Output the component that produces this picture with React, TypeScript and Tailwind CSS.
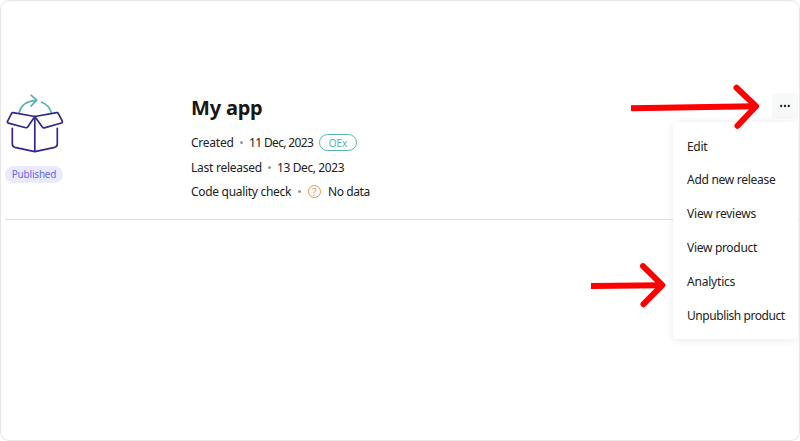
import React from "react";

const menuItems = [
  { label: "Edit", spacing: "tracking-[-0.3px]" },
  { label: "Add new release", spacing: "tracking-[-0.28px]" },
  { label: "View reviews", spacing: "tracking-[-0.2px]" },
  { label: "View product", spacing: "tracking-[-0.3px]" },
  { label: "Analytics", spacing: "tracking-[-0.2px]" },
  { label: "Unpublish product", spacing: "tracking-[-0.43px]" },
];

function BoxLogo() {
  return (
    <svg className="mt-px block h-[60px] w-[60px]" viewBox="0 0 60 60" fill="none" strokeWidth="1.7" strokeLinecap="round" strokeLinejoin="round">
      <g stroke="#58b5ae">
        <path d="M14.2 18.5C16 11.5 22 7 31 6.4M26 1.2l5.8 5L26 12.2M36.5 8.2c5 1.8 8.300 5.5 9.700 10.300" />
      </g>
      <g stroke="#30288e">
        <path d="M29.800 22.500 8.200 18.700Q7 18.500 6.500 19.600L2.500 27.400Q2 28.700 3.400 29.100L20.800 33.700Q22 34 22.700 33Z" />
        <path d="M29.800 22.500 51.700 18.700Q52.900 18.500 53.400 19.600L57.300 27.200Q57.800 28.600 56.400 29L39.300 33.900Q38.200 34.200 37.500 33.200Z" />
        <path d="M29.800 22.500V57.700M7.300 34.300V50Q7.300 52.600 9.800 53.300L29.800 57.700 49.800 53.300Q52.300 52.600 52.300 50V34.300" />
      </g>
    </svg>
  );
}

function Dot() {
  return <i className="block size-[3px] shrink-0 rounded-full bg-[#999]" />;
}

export default function App() {
  return (
    <main className="relative h-[441px] w-[800px] overflow-hidden rounded-[9px] border border-[#e7e7e7] bg-white font-['Noto_Sans',sans-serif] text-[12px] text-[#222]">
      <section className="ml-1 mt-[92px] flex h-[127px] border-b-[1.5px] border-[#dedede]">
        <aside className="flex w-[186px] flex-col items-start">
          <BoxLogo />
          <span className="mt-[12px] flex h-[17px] w-[58px] items-center justify-center rounded-full bg-[#eaeaff] text-[10px] tracking-[-0.2px] text-[#6666ef]">Published</span>
        </aside>
        <div className="flex-1">
          <h1 className="h-[37px] whitespace-nowrap pt-px text-[20px] font-bold leading-[27px] tracking-[-0.2px] text-[#171717]">My app</h1>
          <div className="flex h-[25px] items-center whitespace-nowrap">
            <span className="w-[49px] tracking-[-0.25px]">Created</span><Dot />
            <span className="ml-[6px] w-[70px] tracking-[-0.65px]">11 Dec, 2023</span>
            <span className="flex h-[17px] w-[38px] items-center justify-center rounded-full border border-[#58b5ae] pt-px text-[10px] text-[#58b5ae]">OEx</span>
          </div>
          <div className="flex h-6 items-center whitespace-nowrap pt-px">
            <span className="w-[77px] tracking-[-0.25px]">Last released</span><Dot />
            <span className="ml-[6px] tracking-[-0.4px]">13 Dec, 2023</span>
          </div>
          <div className="flex h-6 items-center whitespace-nowrap pt-px">
            <span className="w-[107px] tracking-[-0.3px]">Code quality check</span><Dot />
            <span className="ml-[7px] mr-[7px] flex size-[13px] items-center justify-center rounded-full border border-[#f2943b] text-[10px] leading-none text-[#f2943b]">?</span>
            <span className="tracking-[-0.4px]">No data</span>
          </div>
        </div>
        <button className="mr-px flex size-[26px] items-center justify-center rounded-[4px] bg-[#f7f9f9]" aria-label="Product actions">
          <svg className="h-[4px] w-[12px]" viewBox="0 0 12 4" fill="#1b1b1b">
            <circle cx="2.2" cy="2" r="1.15" /><circle cx="6" cy="2" r="1.15" /><circle cx="9.800" cy="2" r="1.15" />
          </svg>
        </button>
      </section>
      <nav className="absolute left-[672px] top-[121px] flex h-[217px] w-[125px] flex-col rounded-[4px] bg-white pl-[14px] pt-[7.6px] shadow-[0_1px_9px_rgba(0,0,0,0.09)]">
        {menuItems.map((item) => <button key={item.label} className={`flex h-[33.9px] items-center whitespace-nowrap text-left ${item.spacing}`}>{item.label}</button>)}
      </nav>
      <svg className="absolute left-[630px] top-[82px] h-[48px] w-[132px]" viewBox="0 0 132 48" fill="none" stroke="#f00" strokeWidth="6">
        <path d="M0 25.200 123 23.200" /><path d="M105.500 4.700 125 23.200 106.500 42.700" strokeLinecap="round" strokeLinejoin="round" />
      </svg>
      <svg className="absolute left-[590px] top-[260px] h-[48px] w-[78px]" viewBox="0 0 78 48" fill="none" stroke="#f00" strokeWidth="6">
        <path d="M0 25 70 24.200" /><path d="M52 5.200 71.300 24.200 52.500 43.200" strokeLinecap="round" strokeLinejoin="round" />
      </svg>
    </main>
  );
}
